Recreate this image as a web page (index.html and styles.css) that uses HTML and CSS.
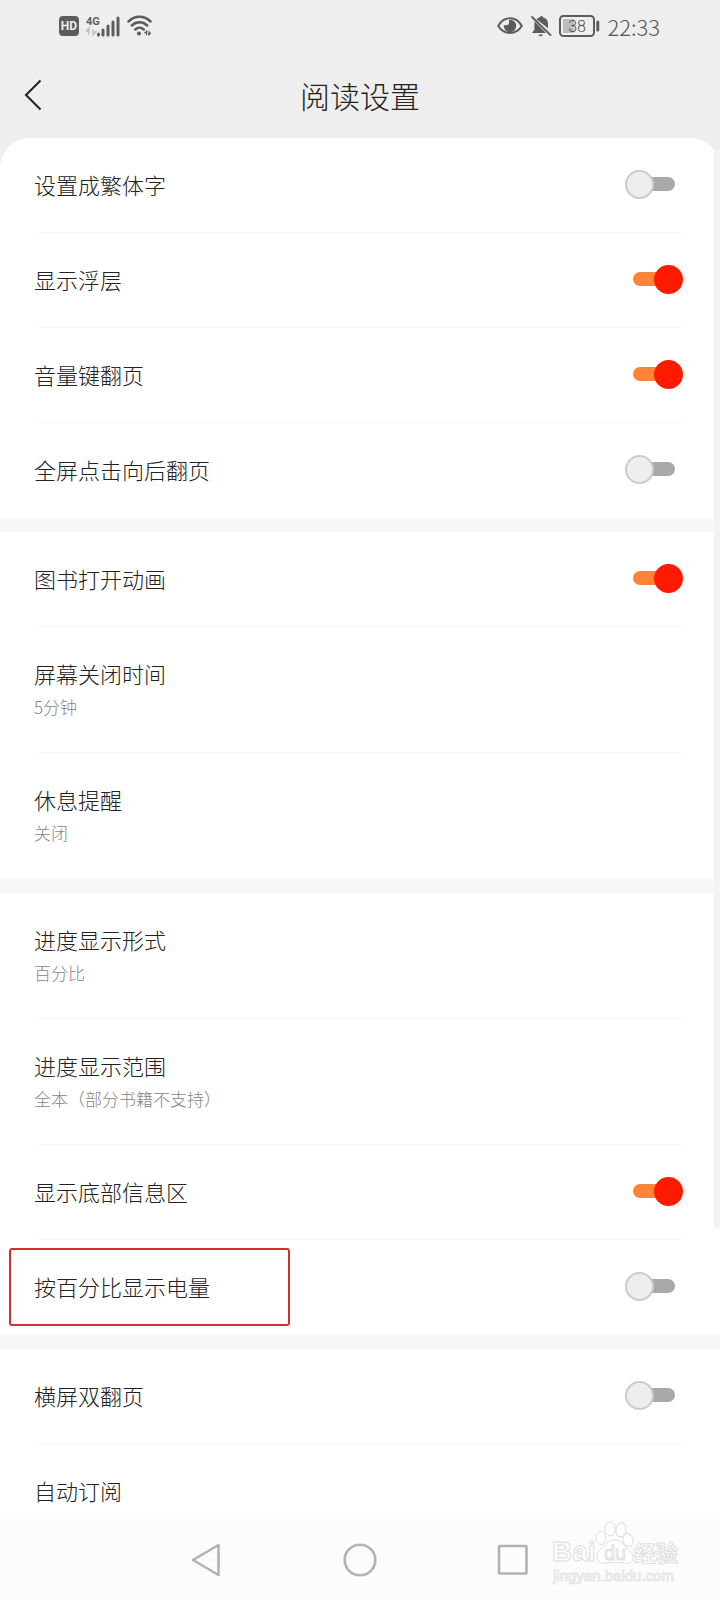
FILE: index.html
```html
<!DOCTYPE html>
<html lang="zh-CN">
<head>
<meta charset="utf-8">
<meta name="viewport" content="width=device-width, initial-scale=1">
<title>阅读设置</title>
<link rel="stylesheet" href="styles.css">
</head>
<body>
<div class="app">
  <div class="status">
    <div class="status-side status-left">
      <svg class="ic-hd" width="20" height="20" viewBox="0 0 20 20"><rect width="20" height="20" rx="4" fill="#5c5c5c"/><text x="10" y="14" text-anchor="middle" class="hd-text">HD</text></svg>
      <svg width="34" height="24" viewBox="0 0 34 24">
        <text x="0" y="11" class="net-text">4G</text>
        <path d="M3 15v6M3 14l-3 3h3zM7 15v6M7 21l3-3H7z" stroke="#c0c0c0" stroke-width="1.4" fill="#c0c0c0"/>
        <path d="M13.500 22v-1M18 22v-5M23 22v-9M28 22v-13M33 22v-17" stroke="#5c5c5c" stroke-width="3" stroke-linecap="round" transform="translate(-1 -1)"/>
      </svg>
      <svg width="26" height="22" viewBox="0 0 26 22" fill="none" stroke="#5c5c5c" stroke-width="2.500" stroke-linecap="round">
        <path d="M1.500 6.500C8 .2 17 .2 23.500 6.500M4.800 10.500c4.500-4.200 11-4.200 15.400 0M8.300 14.500c2.500-2.400 6-2.400 8.400 0"/>
        <circle cx="12" cy="18.500" r="2" fill="#5c5c5c" stroke="none"/>
        <path d="M19.500 16v4M22 16v4M19.500 16l-2 2h2zM22 20l2-2h-2z" stroke-width="1" fill="#5c5c5c"/>
      </svg>
    </div>
    <div class="status-side status-right">
      <svg width="26" height="20" viewBox="0 0 26 20"><path d="M1.200 10C7-.2 19-.2 24.800 10 19 19.200 7 19.200 1.200 10z" fill="none" stroke="#5c5c5c" stroke-width="2"/><circle cx="13" cy="10" r="6.200" fill="#5c5c5c"/><path d="M12 3.500v3.200a2.700 2.700 0 0 1-2.300 2.600H6.600C6.600 6 9 3.500 12 3.500z" fill="#eee"/></svg>
      <svg width="22" height="22" viewBox="0 0 22 22"><path d="M6.500 4.200C8 2.600 9 2.400 10 2.200 10.200.6 12.600.6 13 2.200c3.200.8 5 3.200 5 6.300v4.800zM4.600 6.600L16 18H2l2.400-3.600V8zM8.500 19.500h4.400c-.6 2.400-3.800 2.400-4.400 0z" fill="#5c5c5c"/><path d="M2 2l18.500 18" stroke="#5c5c5c" stroke-width="1.800" stroke-linecap="round"/></svg>
      <svg width="41" height="22" viewBox="0 0 41 22"><rect x="1" y="1" width="34" height="20" rx="3.500" fill="none" stroke="#5c5c5c" stroke-width="2"/><rect x="4" y="4" width="11" height="14" fill="#bdbdbd"/><text x="18" y="17" text-anchor="middle" class="battery-text">38</text><path d="M38.800 7v8" stroke="#5c5c5c" stroke-width="3" stroke-linecap="round"/></svg>
      <time class="clock">22:33</time>
    </div>
  </div>

  <header class="header">
    <button class="back" type="button" aria-label="返回"><svg width="18" height="32" viewBox="0 0 18 32"><path d="M16.500 1.500L2 16l14.500 14.500" fill="none" stroke="#222" stroke-width="2"/></svg></button>
    <h1 class="title">阅读设置</h1>
  </header>

  <main class="main">
    <div class="panel">
      <section class="group">
        <div class="row"><label class="label" for="s1">设置成繁体字</label><input class="switch" type="checkbox" id="s1"></div>
        <div class="row"><label class="label" for="s2">显示浮层</label><input class="switch" type="checkbox" id="s2" checked></div>
        <div class="row"><label class="label" for="s3">音量键翻页</label><input class="switch" type="checkbox" id="s3" checked></div>
        <div class="row"><label class="label" for="s4">全屏点击向后翻页</label><input class="switch" type="checkbox" id="s4"></div>
      </section>
      <section class="group">
        <div class="row"><label class="label" for="s5">图书打开动画</label><input class="switch" type="checkbox" id="s5" checked></div>
        <button class="row row-tall" type="button"><span class="label">屏幕关闭时间</span><span class="value">5分钟</span></button>
        <button class="row row-tall" type="button"><span class="label">休息提醒</span><span class="value">关闭</span></button>
      </section>
      <section class="group">
        <button class="row row-tall" type="button"><span class="label">进度显示形式</span><span class="value">百分比</span></button>
        <button class="row row-tall" type="button"><span class="label">进度显示范围</span><span class="value">全本（部分书籍不支持）</span></button>
        <div class="row"><label class="label" for="s6">显示底部信息区</label><input class="switch" type="checkbox" id="s6" checked></div>
        <div class="row row-marked"><label class="label" for="s7">按百分比显示电量</label><input class="switch" type="checkbox" id="s7"></div>
      </section>
      <section class="group">
        <div class="row"><label class="label" for="s8">横屏双翻页</label><input class="switch" type="checkbox" id="s8"></div>
        <div class="row"><span class="label">自动订阅</span></div>
      </section>
    </div>
    <div class="scrollbar"></div>
  </main>

  <nav class="nav">
    <button class="nav-btn" type="button" aria-label="后退"><svg width="36" height="36" viewBox="0 0 36 36"><path d="M29.500 3L4 18l25.500 15z"/></svg></button>
    <button class="nav-btn" type="button" aria-label="主页"><svg width="36" height="36" viewBox="0 0 36 36"><circle cx="18" cy="18" r="15.300"/></svg></button>
    <button class="nav-btn" type="button" aria-label="最近任务"><svg width="36" height="36" viewBox="0 0 36 36"><rect x="4" y="4" width="27.500" height="27.500" rx="1"/></svg></button>
    <svg class="watermark" width="132" height="66" viewBox="0 0 132 66">
      <text x="2" y="41" class="wm-bai">Bai</text>
      <g class="wm-paw">
        <path d="M65 20c6 0 8 4 12 9 5 4 7 6 6 10-1 4-5 5-9 4-6-1-11-1-17 0-5 1-9-1-10-5-1-5 2-7 6-11s6-7 12-7z"/>
        <ellipse cx="51" cy="18" rx="5" ry="6.500"/><ellipse cx="60" cy="9" rx="5" ry="7"/><ellipse cx="71" cy="10" rx="5" ry="7" transform="rotate(8 71 10)"/><ellipse cx="78" cy="20" rx="5" ry="6.500" transform="rotate(-18 78 20)"/>
      </g>
      <text x="65" y="40" text-anchor="middle" class="wm-du">du</text>
      <text x="84" y="41" class="wm-cn">经验</text>
      <text x="3" y="61" class="wm-url">jingyan.baidu.com</text>
    </svg>
  </nav>
</div>
</body>
</html>
```

FILE: styles.css
```css
*,
*::before,
*::after {
  box-sizing: border-box;
}

body {
  margin: 0;
  font-family: "Noto Sans CJK SC", "Noto Sans", sans-serif;
  font-weight: 300;
  color: #222;
}

button {
  margin: 0;
  padding: 0;
  border: 0;
  background: none;
  font: inherit;
  color: inherit;
  text-align: left;
}

.app {
  display: flex;
  flex-direction: column;
  height: 100vh;
  background: #eee;
}

/* Status bar */
.status {
  display: flex;
  justify-content: space-between;
  align-items: center;
  height: 52px;
  padding: 0 60px 0 59px;
  flex: none;
}

.status-side {
  display: flex;
  align-items: center;
}

.status-left {
  gap: 7px;
}

.status-right {
  gap: 7px;
}

.hd-text {
  font: 700 12px Roboto, sans-serif;
  fill: #eee;
}

.net-text {
  font: 700 11px Roboto, sans-serif;
  fill: #5c5c5c;
}

.battery-text {
  font: 300 16px Roboto, sans-serif;
  fill: #4c4c4c;
}

.clock {
  font-size: 22px;
  line-height: 32px;
  color: #555;
}

/* Title bar */
.header {
  display: grid;
  grid-template-columns: 1fr auto 1fr;
  align-items: center;
  height: 86px;
  padding: 0 24px;
  flex: none;
}

.back {
  justify-self: start;
  display: flex;
}

.title {
  margin: 0;
  font-size: 30px;
  line-height: 40px;
  font-weight: 300;
  color: #222;
}

/* Settings list */
.main {
  position: relative;
  flex: 1;
  min-height: 0;
  overflow: hidden;
}

.panel {
  border-radius: 30px 30px 0 0;
  background: #fff;
}

.group {
  padding: 0 37px 0 34px;
}

.group + .group {
  border-top: 14px solid #f7f7f7;
}

.row {
  position: relative;
  display: flex;
  justify-content: space-between;
  align-items: center;
  width: 100%;
  height: 95px;
  padding-bottom: 2px;
  border-bottom: 1px solid #f8f8f8;
}

.row:last-child {
  border-bottom-color: transparent;
}

.row-tall {
  flex-direction: column;
  justify-content: center;
  align-items: flex-start;
  gap: 3px;
  height: 126px;
  padding-bottom: 0;
}

.label {
  font-size: 22px;
  line-height: 32px;
}

.value {
  font-size: 17px;
  line-height: 30px;
  color: #858585;
}

/* Frame drawn around the highlighted setting */
.row-marked::before {
  content: "";
  position: absolute;
  inset: 8px auto 8px -25px;
  width: 281px;
  border: 2px solid #d0322b;
  border-radius: 3px;
  pointer-events: none;
}

.switch {
  appearance: none;
  display: grid;
  align-items: center;
  width: 58px;
  height: 29px;
  margin: 0;
}

.switch::before,
.switch::after {
  content: "";
  grid-area: 1 / 1;
}

.switch::before {
  height: 14px;
  margin: 0 8px;
  border-radius: 7px;
  background: #a9a9a9;
}

.switch::after {
  width: 29px;
  height: 29px;
  border: 2px solid #ccc;
  border-radius: 50%;
  background: #eee;
}

.switch:checked::before {
  background: #ff8438;
}

.switch:checked::after {
  justify-self: end;
  border-color: #ff1a00;
  background: #ff1a00;
}

.scrollbar {
  position: absolute;
  top: 11px;
  right: 0;
  width: 6px;
  height: 1080px;
  border-radius: 2px;
  background: #f3f3f3;
}

/* System navigation */
.nav {
  position: relative;
  display: flex;
  justify-content: center;
  height: 81px;
  flex: none;
  background: #fcfcfc;
}

.nav-btn {
  display: flex;
  justify-content: center;
  align-items: center;
  width: 153px;
}

.nav-btn svg {
  fill: none;
  stroke: #b2b2b2;
  stroke-width: 2.6;
  stroke-linejoin: round;
}

.watermark {
  position: absolute;
  top: 1px;
  right: 38px;
  fill: #fff;
  stroke: #dedede;
  stroke-width: 1;
}

.wm-bai {
  font: 700 28px "Liberation Sans", sans-serif;
}

.wm-du {
  font: 400 20px "Liberation Sans", sans-serif;
}

.wm-cn {
  font: 700 22px "Noto Sans CJK SC", sans-serif;
}

.wm-url {
  font: 400 15px "Liberation Sans", sans-serif;
  stroke: #e6e6e6;
}
```
